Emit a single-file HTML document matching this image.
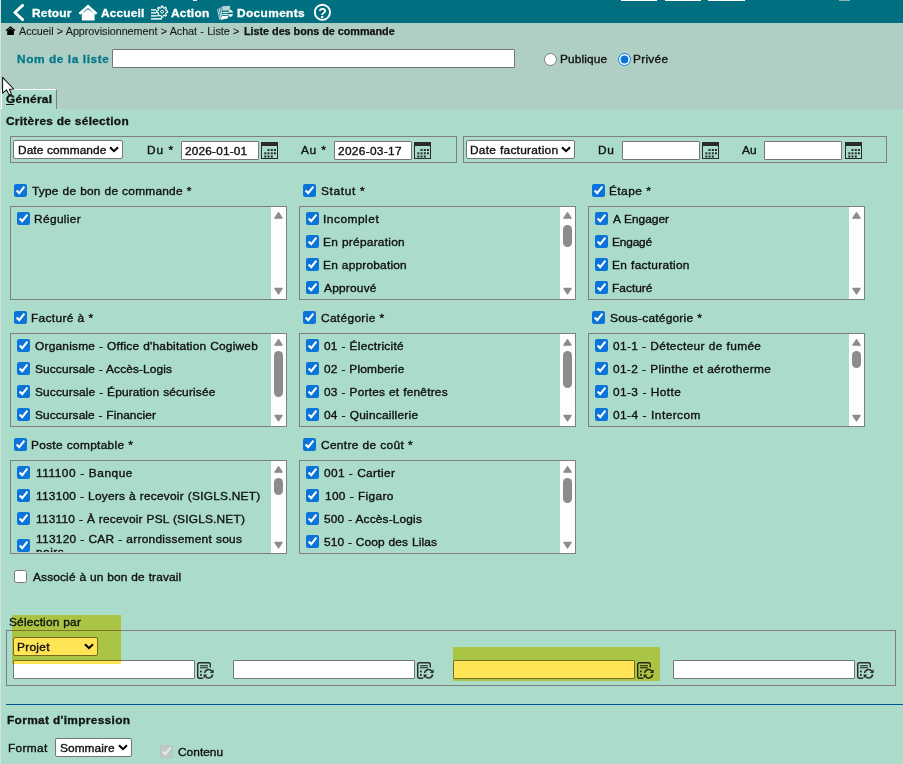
<!DOCTYPE html>
<html><head><meta charset="utf-8"><style>
html,body{margin:0;padding:0;width:903px;height:764px;overflow:hidden;font-family:"Liberation Sans",sans-serif;}
input{accent-color:#0a74d8}
</style></head><body>
<div style="position:absolute;left:0px;top:0px;width:903px;height:764px;background:#aadcc9"></div>
<div style="position:absolute;left:0px;top:0px;width:903px;height:23px;background:#006f7f"></div>
<div style="position:absolute;left:0px;top:23px;width:903px;height:86px;background:#afcfc4"></div>
<div style="position:absolute;left:0px;top:0px;width:1px;height:764px;background:#d5e2dd"></div>
<div style="position:absolute;left:621px;top:0px;width:36px;height:1px;background:#fff"></div>
<div style="position:absolute;left:665px;top:0px;width:36px;height:1px;background:#fff"></div>
<div style="position:absolute;left:708px;top:0px;width:37px;height:1px;background:#fff"></div>
<div style="position:absolute;left:839px;top:0px;width:11px;height:1px;background:#8fb3b9"></div>
<div style="position:absolute;left:193px;top:0px;width:4px;height:1px;background:#e8f4f4"></div>
<div style="position:absolute;left:1px;top:89px;width:56px;height:20px;background:#aadcc9;border-top:1px solid #fff;border-left:1px solid #fff;border-right:1px solid #808080;box-sizing:border-box"></div>
<div style="position:absolute;left:6px;top:104px;width:8px;height:1px;background:#111"></div>
<svg style="position:absolute;left:0;top:0" width="340" height="23" viewBox="0 0 340 23">
<polyline points="22.6,5.4 14.9,12.5 22.6,19.6" fill="none" stroke="#fff" stroke-width="2.9" stroke-linecap="round" stroke-linejoin="round"/>
<path d="M79.4,13.9 L88,6.3 L96.6,13.9" fill="none" stroke="#fff" stroke-width="2.6" stroke-linejoin="miter"/>
<path d="M81.8,20.5 L81.8,13.6 L88,9.2 L94.6,13.6 L94.6,20.5 Z" fill="#fff"/>
<g fill="#fff"><rect x="151" y="9.2" width="5" height="1.4"/><rect x="151" y="12.2" width="5" height="1.4"/><rect x="151" y="15.2" width="6" height="1.4"/><rect x="151" y="18.2" width="11" height="1.4"/></g>
<g transform="translate(162.1,11.7)"><path d="M-0.92,-3.99 L-0.78,-5.55 L0.78,-5.55 L0.92,-3.99 L2.17,-3.48 L3.37,-4.47 L4.47,-3.37 L3.48,-2.17 L3.99,-0.92 L5.55,-0.78 L5.55,0.78 L3.99,0.92 L3.48,2.17 L4.47,3.37 L3.37,4.47 L2.17,3.48 L0.92,3.99 L0.78,5.55 L-0.78,5.55 L-0.92,3.99 L-2.17,3.48 L-3.37,4.47 L-4.47,3.37 L-3.48,2.17 L-3.99,0.92 L-5.55,0.78 L-5.55,-0.78 L-3.99,-0.92 L-3.48,-2.17 L-4.47,-3.37 L-3.37,-4.47 L-2.17,-3.48 Z" fill="none" stroke="#fff" stroke-width="1.1" stroke-linejoin="round"/><circle cx="0" cy="0" r="1.4" fill="none" stroke="#fff" stroke-width="1"/></g>
<g>
<path d="M217.6,9.2 L219.8,19.6 M219.2,8.2 L221.2,19.6 M220.8,7.2 L222.4,19.4" fill="none" stroke="#e6f2f2" stroke-width="0.9"/>
<path d="M222,6.2 L230.2,5.8 L229.8,10.6 L222.4,10.8 Z" fill="#b8d2d5"/>
<rect x="222.6" y="11.9" width="5.2" height="1.1" fill="#f2f8f8"/>
<rect x="222.6" y="13.9" width="5.2" height="1.1" fill="#f2f8f8"/>
<path d="M222.4,16 L228.6,15.8 L227.6,18.4 L220.4,19.8 Z" fill="#fff"/>
<path d="M227.6,12.6 L230.6,9.6 L233.6,12.6 Z" fill="#fff"/>
<path d="M227.6,14.2 L230.6,17.2 L233.6,14.2 Z" fill="#fff"/>
</g>
<circle cx="322.4" cy="12.3" r="7.6" fill="none" stroke="#fff" stroke-width="1.9"/>
<text x="322.6" y="17.8" text-anchor="middle" font-family="Liberation Sans" font-weight="bold" font-size="14" fill="#fff">?</text>
</svg>
<svg style="position:absolute;left:5px;top:26px" width="12" height="10" viewBox="0 0 12 10">
<path d="M1,4.6 L5.5,1 L10,4.6" fill="none" stroke="#000" stroke-width="1.3"/>
<path d="M2.2,9 L2.2,4.6 L5.5,2.3 L8.9,4.6 L8.9,9 Z" fill="#000"/>
</svg>
<div style="position:absolute;left:112px;top:49px;width:403px;height:19px;background:#fff;border:1px solid #767676;border-radius:1px;box-sizing:border-box"></div>
<input type="radio" style="position:absolute;left:544px;top:53px;margin:0">
<input type="radio" checked style="position:absolute;left:618px;top:53px;margin:0">
<svg style="position:absolute;left:0px;top:74px" width="18" height="24" viewBox="0 0 18 24">
<path d="M2.6,3.4 L2.6,19.2 L6.5,15.9 L9.2,21 L11.4,20.2 L9.4,15.2 L13.6,15 Z" fill="#fff" stroke="#111" stroke-width="1.05" stroke-linejoin="round"/>
</svg>
<div style="position:absolute;left:10px;top:136px;width:447px;height:27px;border:1px solid #7f7f7f;box-sizing:border-box"></div>
<div style="position:absolute;left:463px;top:136px;width:424px;height:27px;border:1px solid #7f7f7f;box-sizing:border-box"></div>
<div style="position:absolute;left:13px;top:140px;width:110px;height:19px;background:#fff;border:1px solid #767676;border-radius:2px;box-sizing:border-box"></div>
<svg style="position:absolute;left:109px;top:146px" width="10" height="7" viewBox="0 0 10 7"><polyline points="1,1.2 5,5.2 9,1.2" fill="none" stroke="#000" stroke-width="2"/></svg>
<div style="position:absolute;left:181px;top:141px;width:78px;height:19px;background:#fff;border:1px solid #767676;border-radius:1px;box-sizing:border-box"></div>
<svg style="position:absolute;left:261px;top:142px" width="17" height="17" viewBox="0 0 17 17">
<rect x="0.5" y="0.5" width="16" height="16" fill="none" stroke="#2b2b2b" stroke-width="1"/>
<rect x="0" y="0" width="17" height="4" fill="#2b2b2b"/>
<g fill="#2b2b2b"><rect x="6.5" y="7" width="2" height="2"/><rect x="9.8" y="7" width="2" height="2"/><rect x="12.9" y="7" width="2" height="2"/>
<rect x="3.3" y="10.3" width="2" height="2"/><rect x="6.5" y="10.3" width="2" height="2"/><rect x="9.8" y="10.3" width="2" height="2"/><rect x="12.9" y="10.3" width="2" height="2"/>
<rect x="3.3" y="13.5" width="2" height="2"/><rect x="6.5" y="13.5" width="2" height="2"/><rect x="9.8" y="13.5" width="2" height="2"/></g>
</svg>
<div style="position:absolute;left:334px;top:141px;width:78px;height:19px;background:#fff;border:1px solid #767676;border-radius:1px;box-sizing:border-box"></div>
<svg style="position:absolute;left:414px;top:142px" width="17" height="17" viewBox="0 0 17 17">
<rect x="0.5" y="0.5" width="16" height="16" fill="none" stroke="#2b2b2b" stroke-width="1"/>
<rect x="0" y="0" width="17" height="4" fill="#2b2b2b"/>
<g fill="#2b2b2b"><rect x="6.5" y="7" width="2" height="2"/><rect x="9.8" y="7" width="2" height="2"/><rect x="12.9" y="7" width="2" height="2"/>
<rect x="3.3" y="10.3" width="2" height="2"/><rect x="6.5" y="10.3" width="2" height="2"/><rect x="9.8" y="10.3" width="2" height="2"/><rect x="12.9" y="10.3" width="2" height="2"/>
<rect x="3.3" y="13.5" width="2" height="2"/><rect x="6.5" y="13.5" width="2" height="2"/><rect x="9.8" y="13.5" width="2" height="2"/></g>
</svg>
<div style="position:absolute;left:466px;top:140px;width:109px;height:19px;background:#fff;border:1px solid #767676;border-radius:2px;box-sizing:border-box"></div>
<svg style="position:absolute;left:561px;top:146px" width="10" height="7" viewBox="0 0 10 7"><polyline points="1,1.2 5,5.2 9,1.2" fill="none" stroke="#000" stroke-width="2"/></svg>
<div style="position:absolute;left:622px;top:141px;width:78px;height:19px;background:#fff;border:1px solid #767676;border-radius:1px;box-sizing:border-box"></div>
<svg style="position:absolute;left:702px;top:142px" width="17" height="17" viewBox="0 0 17 17">
<rect x="0.5" y="0.5" width="16" height="16" fill="none" stroke="#2b2b2b" stroke-width="1"/>
<rect x="0" y="0" width="17" height="4" fill="#2b2b2b"/>
<g fill="#2b2b2b"><rect x="6.5" y="7" width="2" height="2"/><rect x="9.8" y="7" width="2" height="2"/><rect x="12.9" y="7" width="2" height="2"/>
<rect x="3.3" y="10.3" width="2" height="2"/><rect x="6.5" y="10.3" width="2" height="2"/><rect x="9.8" y="10.3" width="2" height="2"/><rect x="12.9" y="10.3" width="2" height="2"/>
<rect x="3.3" y="13.5" width="2" height="2"/><rect x="6.5" y="13.5" width="2" height="2"/><rect x="9.8" y="13.5" width="2" height="2"/></g>
</svg>
<div style="position:absolute;left:764px;top:141px;width:78px;height:19px;background:#fff;border:1px solid #767676;border-radius:1px;box-sizing:border-box"></div>
<svg style="position:absolute;left:845px;top:142px" width="17" height="17" viewBox="0 0 17 17">
<rect x="0.5" y="0.5" width="16" height="16" fill="none" stroke="#2b2b2b" stroke-width="1"/>
<rect x="0" y="0" width="17" height="4" fill="#2b2b2b"/>
<g fill="#2b2b2b"><rect x="6.5" y="7" width="2" height="2"/><rect x="9.8" y="7" width="2" height="2"/><rect x="12.9" y="7" width="2" height="2"/>
<rect x="3.3" y="10.3" width="2" height="2"/><rect x="6.5" y="10.3" width="2" height="2"/><rect x="9.8" y="10.3" width="2" height="2"/><rect x="12.9" y="10.3" width="2" height="2"/>
<rect x="3.3" y="13.5" width="2" height="2"/><rect x="6.5" y="13.5" width="2" height="2"/><rect x="9.8" y="13.5" width="2" height="2"/></g>
</svg>
<input type="checkbox" checked style="position:absolute;left:14px;top:184px;margin:0">
<div style="position:absolute;left:10px;top:206px;width:277px;height:94px;border:1px solid #7f7f7f;box-sizing:border-box;overflow:hidden"></div>
<div style="position:absolute;left:271px;top:207px;width:15px;height:92px;background:#fdfdfd"></div>
<svg style="position:absolute;left:271px;top:207px" width="15" height="91" viewBox="0 0 15 91"><path d="M3.9,11.2 L7.5,5.7 L11.1,11.2 Z" fill="#8c8c8c" stroke="#8c8c8c" stroke-width="1.3" stroke-linejoin="round"/><path d="M3.9,81.4 L7.5,86.9 L11.1,81.4 Z" fill="#8c8c8c" stroke="#8c8c8c" stroke-width="1.3" stroke-linejoin="round"/></svg>
<input type="checkbox" checked style="position:absolute;left:17px;top:212px;margin:0">
<input type="checkbox" checked style="position:absolute;left:303px;top:184px;margin:0">
<div style="position:absolute;left:299px;top:206px;width:277px;height:94px;border:1px solid #7f7f7f;box-sizing:border-box;overflow:hidden"></div>
<div style="position:absolute;left:560px;top:207px;width:15px;height:92px;background:#fdfdfd"></div>
<svg style="position:absolute;left:560px;top:207px" width="15" height="91" viewBox="0 0 15 91"><path d="M3.9,11.2 L7.5,5.7 L11.1,11.2 Z" fill="#8c8c8c" stroke="#8c8c8c" stroke-width="1.3" stroke-linejoin="round"/><path d="M3.9,81.4 L7.5,86.9 L11.1,81.4 Z" fill="#8c8c8c" stroke="#8c8c8c" stroke-width="1.3" stroke-linejoin="round"/></svg>
<div style="position:absolute;left:563px;top:224.7px;width:9px;height:21.9px;background:#8c8c8c;border-radius:4.5px"></div>
<input type="checkbox" checked style="position:absolute;left:306px;top:212px;margin:0">
<input type="checkbox" checked style="position:absolute;left:306px;top:235px;margin:0">
<input type="checkbox" checked style="position:absolute;left:306px;top:258px;margin:0">
<input type="checkbox" checked style="position:absolute;left:306px;top:281px;margin:0">
<input type="checkbox" checked style="position:absolute;left:592px;top:184px;margin:0">
<div style="position:absolute;left:588px;top:206px;width:277px;height:94px;border:1px solid #7f7f7f;box-sizing:border-box;overflow:hidden"></div>
<div style="position:absolute;left:849px;top:207px;width:15px;height:92px;background:#fdfdfd"></div>
<svg style="position:absolute;left:849px;top:207px" width="15" height="91" viewBox="0 0 15 91"><path d="M3.9,11.2 L7.5,5.7 L11.1,11.2 Z" fill="#8c8c8c" stroke="#8c8c8c" stroke-width="1.3" stroke-linejoin="round"/><path d="M3.9,81.4 L7.5,86.9 L11.1,81.4 Z" fill="#8c8c8c" stroke="#8c8c8c" stroke-width="1.3" stroke-linejoin="round"/></svg>
<input type="checkbox" checked style="position:absolute;left:595px;top:212px;margin:0">
<input type="checkbox" checked style="position:absolute;left:595px;top:235px;margin:0">
<input type="checkbox" checked style="position:absolute;left:595px;top:258px;margin:0">
<input type="checkbox" checked style="position:absolute;left:595px;top:281px;margin:0">
<input type="checkbox" checked style="position:absolute;left:14px;top:311px;margin:0">
<div style="position:absolute;left:10px;top:333px;width:277px;height:94px;border:1px solid #7f7f7f;box-sizing:border-box;overflow:hidden"></div>
<div style="position:absolute;left:271px;top:334px;width:15px;height:92px;background:#fdfdfd"></div>
<svg style="position:absolute;left:271px;top:334px" width="15" height="91" viewBox="0 0 15 91"><path d="M3.9,11.2 L7.5,5.7 L11.1,11.2 Z" fill="#8c8c8c" stroke="#8c8c8c" stroke-width="1.3" stroke-linejoin="round"/><path d="M3.9,81.4 L7.5,86.9 L11.1,81.4 Z" fill="#8c8c8c" stroke="#8c8c8c" stroke-width="1.3" stroke-linejoin="round"/></svg>
<div style="position:absolute;left:274px;top:351.3px;width:9px;height:45.3px;background:#8c8c8c;border-radius:4.5px"></div>
<input type="checkbox" checked style="position:absolute;left:17px;top:339px;margin:0">
<input type="checkbox" checked style="position:absolute;left:17px;top:362px;margin:0">
<input type="checkbox" checked style="position:absolute;left:17px;top:385px;margin:0">
<input type="checkbox" checked style="position:absolute;left:17px;top:408px;margin:0">
<input type="checkbox" checked style="position:absolute;left:303px;top:311px;margin:0">
<div style="position:absolute;left:299px;top:333px;width:277px;height:94px;border:1px solid #7f7f7f;box-sizing:border-box;overflow:hidden"></div>
<div style="position:absolute;left:560px;top:334px;width:15px;height:92px;background:#fdfdfd"></div>
<svg style="position:absolute;left:560px;top:334px" width="15" height="91" viewBox="0 0 15 91"><path d="M3.9,11.2 L7.5,5.7 L11.1,11.2 Z" fill="#8c8c8c" stroke="#8c8c8c" stroke-width="1.3" stroke-linejoin="round"/><path d="M3.9,81.4 L7.5,86.9 L11.1,81.4 Z" fill="#8c8c8c" stroke="#8c8c8c" stroke-width="1.3" stroke-linejoin="round"/></svg>
<div style="position:absolute;left:563px;top:351.3px;width:9px;height:37.0px;background:#8c8c8c;border-radius:4.5px"></div>
<input type="checkbox" checked style="position:absolute;left:306px;top:339px;margin:0">
<input type="checkbox" checked style="position:absolute;left:306px;top:362px;margin:0">
<input type="checkbox" checked style="position:absolute;left:306px;top:385px;margin:0">
<input type="checkbox" checked style="position:absolute;left:306px;top:408px;margin:0">
<input type="checkbox" checked style="position:absolute;left:592px;top:311px;margin:0">
<div style="position:absolute;left:588px;top:333px;width:277px;height:94px;border:1px solid #7f7f7f;box-sizing:border-box;overflow:hidden"></div>
<div style="position:absolute;left:849px;top:334px;width:15px;height:92px;background:#fdfdfd"></div>
<svg style="position:absolute;left:849px;top:334px" width="15" height="91" viewBox="0 0 15 91"><path d="M3.9,11.2 L7.5,5.7 L11.1,11.2 Z" fill="#8c8c8c" stroke="#8c8c8c" stroke-width="1.3" stroke-linejoin="round"/><path d="M3.9,81.4 L7.5,86.9 L11.1,81.4 Z" fill="#8c8c8c" stroke="#8c8c8c" stroke-width="1.3" stroke-linejoin="round"/></svg>
<div style="position:absolute;left:852px;top:351.3px;width:9px;height:17.2px;background:#8c8c8c;border-radius:4.5px"></div>
<input type="checkbox" checked style="position:absolute;left:595px;top:339px;margin:0">
<input type="checkbox" checked style="position:absolute;left:595px;top:362px;margin:0">
<input type="checkbox" checked style="position:absolute;left:595px;top:385px;margin:0">
<input type="checkbox" checked style="position:absolute;left:595px;top:408px;margin:0">
<input type="checkbox" checked style="position:absolute;left:14px;top:438px;margin:0">
<div style="position:absolute;left:10px;top:460px;width:277px;height:94px;border:1px solid #7f7f7f;box-sizing:border-box;overflow:hidden"></div>
<div style="position:absolute;left:271px;top:461px;width:15px;height:92px;background:#fdfdfd"></div>
<svg style="position:absolute;left:271px;top:461px" width="15" height="91" viewBox="0 0 15 91"><path d="M3.9,11.2 L7.5,5.7 L11.1,11.2 Z" fill="#8c8c8c" stroke="#8c8c8c" stroke-width="1.3" stroke-linejoin="round"/><path d="M3.9,81.4 L7.5,86.9 L11.1,81.4 Z" fill="#8c8c8c" stroke="#8c8c8c" stroke-width="1.3" stroke-linejoin="round"/></svg>
<div style="position:absolute;left:274px;top:478.3px;width:9px;height:17.2px;background:#8c8c8c;border-radius:4.5px"></div>
<input type="checkbox" checked style="position:absolute;left:17px;top:466px;margin:0">
<input type="checkbox" checked style="position:absolute;left:17px;top:489px;margin:0">
<input type="checkbox" checked style="position:absolute;left:17px;top:512px;margin:0">
<input type="checkbox" checked style="position:absolute;left:17px;top:539px;margin:0">
<input type="checkbox" checked style="position:absolute;left:303px;top:438px;margin:0">
<div style="position:absolute;left:299px;top:460px;width:277px;height:94px;border:1px solid #7f7f7f;box-sizing:border-box;overflow:hidden"></div>
<div style="position:absolute;left:560px;top:461px;width:15px;height:92px;background:#fdfdfd"></div>
<svg style="position:absolute;left:560px;top:461px" width="15" height="91" viewBox="0 0 15 91"><path d="M3.9,11.2 L7.5,5.7 L11.1,11.2 Z" fill="#8c8c8c" stroke="#8c8c8c" stroke-width="1.3" stroke-linejoin="round"/><path d="M3.9,81.4 L7.5,86.9 L11.1,81.4 Z" fill="#8c8c8c" stroke="#8c8c8c" stroke-width="1.3" stroke-linejoin="round"/></svg>
<div style="position:absolute;left:563px;top:478.3px;width:9px;height:25.2px;background:#8c8c8c;border-radius:4.5px"></div>
<input type="checkbox" checked style="position:absolute;left:306px;top:466px;margin:0">
<input type="checkbox" checked style="position:absolute;left:306px;top:489px;margin:0">
<input type="checkbox" checked style="position:absolute;left:306px;top:512px;margin:0">
<input type="checkbox" checked style="position:absolute;left:306px;top:535px;margin:0">
<input type="checkbox" style="position:absolute;left:14px;top:570px;margin:0">
<div style="position:absolute;left:6px;top:630px;width:890px;height:56px;border:1px solid #7f7f7f;box-sizing:border-box"></div>
<div style="position:absolute;left:13px;top:637px;width:85px;height:19px;background:#fff;border:1px solid #767676;border-radius:2px;box-sizing:border-box"></div>
<svg style="position:absolute;left:84px;top:643px" width="10" height="7" viewBox="0 0 10 7"><polyline points="1,1.2 5,5.2 9,1.2" fill="none" stroke="#000" stroke-width="2"/></svg>
<div style="position:absolute;left:13px;top:660px;width:182px;height:19px;background:#fff;border:1px solid #767676;border-radius:1px;box-sizing:border-box"></div>
<svg style="position:absolute;left:197px;top:662px" width="18" height="17" viewBox="0 0 18 17">
<path d="M6,16.3 L2.5,16.3 Q0.7,16.3 0.7,14.5 L0.7,2.5 Q0.7,0.7 2.5,0.7 L11.5,0.7 Q13.3,0.7 13.3,2.5 L13.3,5.5" fill="none" stroke="#2b2b2b" stroke-width="1.4"/>
<rect x="3" y="3.2" width="8" height="1.1" fill="#2b2b2b"/><rect x="3" y="5.2" width="8" height="1.1" fill="#2b2b2b"/>
<rect x="3" y="8.6" width="1.8" height="1.8" fill="#2b2b2b"/><rect x="3" y="12" width="1.8" height="1.8" fill="#2b2b2b"/>
<path d="M7.6,11 A4,4 0 0 1 14.8,9.2" fill="none" stroke="#2b2b2b" stroke-width="1.5"/><path d="M16.6,7.2 L16.6,11 L12.8,11 Z" fill="#2b2b2b"/>
<path d="M15.6,12.4 A4,4 0 0 1 8.4,14.4" fill="none" stroke="#2b2b2b" stroke-width="1.5"/><path d="M6.6,16.4 L6.6,12.6 L10.4,12.6 Z" fill="#2b2b2b"/>
</svg>
<div style="position:absolute;left:233px;top:660px;width:182px;height:19px;background:#fff;border:1px solid #767676;border-radius:1px;box-sizing:border-box"></div>
<svg style="position:absolute;left:417px;top:662px" width="18" height="17" viewBox="0 0 18 17">
<path d="M6,16.3 L2.5,16.3 Q0.7,16.3 0.7,14.5 L0.7,2.5 Q0.7,0.7 2.5,0.7 L11.5,0.7 Q13.3,0.7 13.3,2.5 L13.3,5.5" fill="none" stroke="#2b2b2b" stroke-width="1.4"/>
<rect x="3" y="3.2" width="8" height="1.1" fill="#2b2b2b"/><rect x="3" y="5.2" width="8" height="1.1" fill="#2b2b2b"/>
<rect x="3" y="8.6" width="1.8" height="1.8" fill="#2b2b2b"/><rect x="3" y="12" width="1.8" height="1.8" fill="#2b2b2b"/>
<path d="M7.6,11 A4,4 0 0 1 14.8,9.2" fill="none" stroke="#2b2b2b" stroke-width="1.5"/><path d="M16.6,7.2 L16.6,11 L12.8,11 Z" fill="#2b2b2b"/>
<path d="M15.6,12.4 A4,4 0 0 1 8.4,14.4" fill="none" stroke="#2b2b2b" stroke-width="1.5"/><path d="M6.6,16.4 L6.6,12.6 L10.4,12.6 Z" fill="#2b2b2b"/>
</svg>
<div style="position:absolute;left:453px;top:660px;width:182px;height:19px;background:#fff;border:1px solid #767676;border-radius:1px;box-sizing:border-box"></div>
<svg style="position:absolute;left:637px;top:662px" width="18" height="17" viewBox="0 0 18 17">
<path d="M6,16.3 L2.5,16.3 Q0.7,16.3 0.7,14.5 L0.7,2.5 Q0.7,0.7 2.5,0.7 L11.5,0.7 Q13.3,0.7 13.3,2.5 L13.3,5.5" fill="none" stroke="#2b2b2b" stroke-width="1.4"/>
<rect x="3" y="3.2" width="8" height="1.1" fill="#2b2b2b"/><rect x="3" y="5.2" width="8" height="1.1" fill="#2b2b2b"/>
<rect x="3" y="8.6" width="1.8" height="1.8" fill="#2b2b2b"/><rect x="3" y="12" width="1.8" height="1.8" fill="#2b2b2b"/>
<path d="M7.6,11 A4,4 0 0 1 14.8,9.2" fill="none" stroke="#2b2b2b" stroke-width="1.5"/><path d="M16.6,7.2 L16.6,11 L12.8,11 Z" fill="#2b2b2b"/>
<path d="M15.6,12.4 A4,4 0 0 1 8.4,14.4" fill="none" stroke="#2b2b2b" stroke-width="1.5"/><path d="M6.6,16.4 L6.6,12.6 L10.4,12.6 Z" fill="#2b2b2b"/>
</svg>
<div style="position:absolute;left:673px;top:660px;width:182px;height:19px;background:#fff;border:1px solid #767676;border-radius:1px;box-sizing:border-box"></div>
<svg style="position:absolute;left:857px;top:662px" width="18" height="17" viewBox="0 0 18 17">
<path d="M6,16.3 L2.5,16.3 Q0.7,16.3 0.7,14.5 L0.7,2.5 Q0.7,0.7 2.5,0.7 L11.5,0.7 Q13.3,0.7 13.3,2.5 L13.3,5.5" fill="none" stroke="#2b2b2b" stroke-width="1.4"/>
<rect x="3" y="3.2" width="8" height="1.1" fill="#2b2b2b"/><rect x="3" y="5.2" width="8" height="1.1" fill="#2b2b2b"/>
<rect x="3" y="8.6" width="1.8" height="1.8" fill="#2b2b2b"/><rect x="3" y="12" width="1.8" height="1.8" fill="#2b2b2b"/>
<path d="M7.6,11 A4,4 0 0 1 14.8,9.2" fill="none" stroke="#2b2b2b" stroke-width="1.5"/><path d="M16.6,7.2 L16.6,11 L12.8,11 Z" fill="#2b2b2b"/>
<path d="M15.6,12.4 A4,4 0 0 1 8.4,14.4" fill="none" stroke="#2b2b2b" stroke-width="1.5"/><path d="M6.6,16.4 L6.6,12.6 L10.4,12.6 Z" fill="#2b2b2b"/>
</svg>
<div style="position:absolute;left:12px;top:615px;width:109px;height:49px;background:#ffe455;mix-blend-mode:multiply"></div>
<div style="position:absolute;left:453px;top:647px;width:207px;height:34px;background:#ffe455;mix-blend-mode:multiply"></div>
<div style="position:absolute;left:6px;top:704px;width:897px;height:1px;background:#03539b"></div>
<div style="position:absolute;left:55px;top:738px;width:77px;height:19px;background:#fff;border:1px solid #767676;border-radius:2px;box-sizing:border-box"></div>
<svg style="position:absolute;left:118px;top:744px" width="10" height="7" viewBox="0 0 10 7"><polyline points="1,1.2 5,5.2 9,1.2" fill="none" stroke="#000" stroke-width="2"/></svg>
<input type="checkbox" checked disabled style="position:absolute;left:160px;top:745px;margin:0">
<span style="position:absolute;left:31.6px;top:7px;font:bold 11px/13px 'Liberation Sans';white-space:pre;transform:scaleX(1.08);transform-origin:0 0;letter-spacing:0.223px;word-spacing:0.0px;-webkit-text-stroke:0.3px currentColor;color:#fff">Retour</span>
<span style="position:absolute;left:101px;top:7px;font:bold 11px/13px 'Liberation Sans';white-space:pre;transform:scaleX(1.08);transform-origin:0 0;letter-spacing:0.154px;word-spacing:0.0px;-webkit-text-stroke:0.3px currentColor;color:#fff">Accueil</span>
<span style="position:absolute;left:171.4px;top:7px;font:bold 11px/13px 'Liberation Sans';white-space:pre;transform:scaleX(1.08);transform-origin:0 0;letter-spacing:0.222px;word-spacing:0.0px;-webkit-text-stroke:0.3px currentColor;color:#fff">Action</span>
<span style="position:absolute;left:237px;top:7px;font:bold 11px/13px 'Liberation Sans';white-space:pre;transform:scaleX(1.08);transform-origin:0 0;letter-spacing:0.347px;word-spacing:0.0px;-webkit-text-stroke:0.3px currentColor;color:#fff">Documents</span>
<span style="position:absolute;left:19px;top:25px;font:normal 10px/13px 'Liberation Sans';white-space:pre;transform:scaleX(1.08);transform-origin:0 0;letter-spacing:-0.042px;word-spacing:0.3px;-webkit-text-stroke:0.12px currentColor;color:#1b1b1b">Accueil &gt; Approvisionnement &gt; Achat - Liste &gt;</span>
<span style="position:absolute;left:243.6px;top:25px;font:bold 10px/13px 'Liberation Sans';white-space:pre;transform:scaleX(1.08);transform-origin:0 0;letter-spacing:-0.022px;word-spacing:0.0px;-webkit-text-stroke:0.25px currentColor;color:#111">Liste des bons de commande</span>
<span style="position:absolute;left:16.5px;top:53px;font:bold 11px/13px 'Liberation Sans';white-space:pre;transform:scaleX(1.08);transform-origin:0 0;letter-spacing:0.529px;word-spacing:0.0px;-webkit-text-stroke:0.3px currentColor;color:#05788a">Nom de la liste</span>
<span style="position:absolute;left:559.9px;top:53px;font:normal 11px/13px 'Liberation Sans';white-space:pre;transform:scaleX(1.08);transform-origin:0 0;letter-spacing:0.106px;word-spacing:0.3px;-webkit-text-stroke:0.35px currentColor;color:#111">Publique</span>
<span style="position:absolute;left:633.1px;top:53px;font:normal 11px/13px 'Liberation Sans';white-space:pre;transform:scaleX(1.08);transform-origin:0 0;letter-spacing:0.26px;word-spacing:0.3px;-webkit-text-stroke:0.35px currentColor;color:#111">Privée</span>
<span style="position:absolute;left:6.3px;top:93px;font:bold 11px/13px 'Liberation Sans';white-space:pre;transform:scaleX(1.08);transform-origin:0 0;letter-spacing:0.278px;word-spacing:0.0px;-webkit-text-stroke:0.3px currentColor;color:#111">Général</span>
<span style="position:absolute;left:6.3px;top:115px;font:bold 11px/13px 'Liberation Sans';white-space:pre;transform:scaleX(1.08);transform-origin:0 0;letter-spacing:0.268px;word-spacing:0.0px;-webkit-text-stroke:0.3px currentColor;color:#111">Critères de sélection</span>
<span style="position:absolute;left:17.6px;top:144px;font:normal 11px/13px 'Liberation Sans';white-space:pre;transform:scaleX(1.08);transform-origin:0 0;letter-spacing:0.061px;word-spacing:0.3px;-webkit-text-stroke:0.35px currentColor;color:#111">Date commande</span>
<span style="position:absolute;left:146.5px;top:144px;font:normal 11px/13px 'Liberation Sans';white-space:pre;transform:scaleX(1.08);transform-origin:0 0;letter-spacing:0.864px;word-spacing:0.3px;-webkit-text-stroke:0.35px currentColor;color:#111">Du *</span>
<span style="position:absolute;left:185.4px;top:145px;font:normal 11px/13px 'Liberation Sans';white-space:pre;transform:scaleX(1.08);transform-origin:0 0;letter-spacing:0.144px;word-spacing:0.3px;-webkit-text-stroke:0.35px currentColor;color:#111">2026-01-01</span>
<span style="position:absolute;left:301px;top:144px;font:normal 11px/13px 'Liberation Sans';white-space:pre;transform:scaleX(1.08);transform-origin:0 0;letter-spacing:0.617px;word-spacing:0.3px;-webkit-text-stroke:0.35px currentColor;color:#111">Au *</span>
<span style="position:absolute;left:338px;top:145px;font:normal 11px/13px 'Liberation Sans';white-space:pre;transform:scaleX(1.08);transform-origin:0 0;letter-spacing:0.288px;word-spacing:0.3px;-webkit-text-stroke:0.35px currentColor;color:#111">2026-03-17</span>
<span style="position:absolute;left:470.1px;top:144px;font:normal 11px/13px 'Liberation Sans';white-space:pre;transform:scaleX(1.08);transform-origin:0 0;letter-spacing:0.235px;word-spacing:0.3px;-webkit-text-stroke:0.35px currentColor;color:#111">Date facturation</span>
<span style="position:absolute;left:598.4px;top:144px;font:normal 11px/13px 'Liberation Sans';white-space:pre;transform:scaleX(1.08);transform-origin:0 0;letter-spacing:0.556px;word-spacing:0.3px;-webkit-text-stroke:0.35px currentColor;color:#111">Du</span>
<span style="position:absolute;left:741.8px;top:144px;font:normal 11px/13px 'Liberation Sans';white-space:pre;transform:scaleX(1.08);transform-origin:0 0;letter-spacing:0.0px;word-spacing:0.3px;-webkit-text-stroke:0.35px currentColor;color:#111">Au</span>
<span style="position:absolute;left:32.3px;top:185px;font:normal 11px/13px 'Liberation Sans';white-space:pre;transform:scaleX(1.08);transform-origin:0 0;letter-spacing:0.223px;word-spacing:0.3px;-webkit-text-stroke:0.35px currentColor;color:#111">Type de bon de commande *</span>
<span style="position:absolute;left:34.3px;top:213px;font:normal 11px/13px 'Liberation Sans';white-space:pre;transform:scaleX(1.08);transform-origin:0 0;letter-spacing:0.337px;word-spacing:0.3px;-webkit-text-stroke:0.35px currentColor;color:#111">Régulier</span>
<span style="position:absolute;left:321.3px;top:185px;font:normal 11px/13px 'Liberation Sans';white-space:pre;transform:scaleX(1.08);transform-origin:0 0;letter-spacing:0.582px;word-spacing:0.3px;-webkit-text-stroke:0.35px currentColor;color:#111">Statut *</span>
<span style="position:absolute;left:323.3px;top:213px;font:normal 11px/13px 'Liberation Sans';white-space:pre;transform:scaleX(1.08);transform-origin:0 0;letter-spacing:0.486px;word-spacing:0.3px;-webkit-text-stroke:0.35px currentColor;color:#111">Incomplet</span>
<span style="position:absolute;left:323.3px;top:236px;font:normal 11px/13px 'Liberation Sans';white-space:pre;transform:scaleX(1.08);transform-origin:0 0;letter-spacing:0.243px;word-spacing:0.3px;-webkit-text-stroke:0.35px currentColor;color:#111">En préparation</span>
<span style="position:absolute;left:323.3px;top:259px;font:normal 11px/13px 'Liberation Sans';white-space:pre;transform:scaleX(1.08);transform-origin:0 0;letter-spacing:0.2px;word-spacing:0.3px;-webkit-text-stroke:0.35px currentColor;color:#111">En approbation</span>
<span style="position:absolute;left:324.3px;top:282px;font:normal 11px/13px 'Liberation Sans';white-space:pre;transform:scaleX(1.08);transform-origin:0 0;letter-spacing:0.212px;word-spacing:0.3px;-webkit-text-stroke:0.35px currentColor;color:#111">Approuvé</span>
<span style="position:absolute;left:609.3px;top:185px;font:normal 11px/13px 'Liberation Sans';white-space:pre;transform:scaleX(1.08);transform-origin:0 0;letter-spacing:0.401px;word-spacing:0.3px;-webkit-text-stroke:0.35px currentColor;color:#111">Étape *</span>
<span style="position:absolute;left:613.3px;top:213px;font:normal 11px/13px 'Liberation Sans';white-space:pre;transform:scaleX(1.08);transform-origin:0 0;letter-spacing:0.024px;word-spacing:0.3px;-webkit-text-stroke:0.35px currentColor;color:#111">A Engager</span>
<span style="position:absolute;left:612.3px;top:236px;font:normal 11px/13px 'Liberation Sans';white-space:pre;transform:scaleX(1.08);transform-origin:0 0;letter-spacing:-0.148px;word-spacing:0.3px;-webkit-text-stroke:0.35px currentColor;color:#111">Engagé</span>
<span style="position:absolute;left:612.3px;top:259px;font:normal 11px/13px 'Liberation Sans';white-space:pre;transform:scaleX(1.08);transform-origin:0 0;letter-spacing:0.271px;word-spacing:0.3px;-webkit-text-stroke:0.35px currentColor;color:#111">En facturation</span>
<span style="position:absolute;left:612.3px;top:282px;font:normal 11px/13px 'Liberation Sans';white-space:pre;transform:scaleX(1.08);transform-origin:0 0;letter-spacing:0.03px;word-spacing:0.3px;-webkit-text-stroke:0.35px currentColor;color:#111">Facturé</span>
<span style="position:absolute;left:31.3px;top:312px;font:normal 11px/13px 'Liberation Sans';white-space:pre;transform:scaleX(1.08);transform-origin:0 0;letter-spacing:0.315px;word-spacing:0.3px;-webkit-text-stroke:0.35px currentColor;color:#111">Facturé à *</span>
<span style="position:absolute;left:35.3px;top:340px;font:normal 11px/13px 'Liberation Sans';white-space:pre;transform:scaleX(1.08);transform-origin:0 0;letter-spacing:0.215px;word-spacing:0.3px;-webkit-text-stroke:0.35px currentColor;color:#111">Organisme - Office d'habitation Cogiweb</span>
<span style="position:absolute;left:35.3px;top:363px;font:normal 11px/13px 'Liberation Sans';white-space:pre;transform:scaleX(1.08);transform-origin:0 0;letter-spacing:0.121px;word-spacing:0.3px;-webkit-text-stroke:0.35px currentColor;color:#111">Succursale - Accès-Logis</span>
<span style="position:absolute;left:35.3px;top:386px;font:normal 11px/13px 'Liberation Sans';white-space:pre;transform:scaleX(1.08);transform-origin:0 0;letter-spacing:0.149px;word-spacing:0.3px;-webkit-text-stroke:0.35px currentColor;color:#111">Succursale - Épuration sécurisée</span>
<span style="position:absolute;left:35.3px;top:409px;font:normal 11px/13px 'Liberation Sans';white-space:pre;transform:scaleX(1.08);transform-origin:0 0;letter-spacing:0.097px;word-spacing:0.3px;-webkit-text-stroke:0.35px currentColor;color:#111">Succursale - Financier</span>
<span style="position:absolute;left:321.3px;top:312px;font:normal 11px/13px 'Liberation Sans';white-space:pre;transform:scaleX(1.08);transform-origin:0 0;letter-spacing:0.315px;word-spacing:0.3px;-webkit-text-stroke:0.35px currentColor;color:#111">Catégorie *</span>
<span style="position:absolute;left:324.3px;top:340px;font:normal 11px/13px 'Liberation Sans';white-space:pre;transform:scaleX(1.08);transform-origin:0 0;letter-spacing:0.223px;word-spacing:0.3px;-webkit-text-stroke:0.35px currentColor;color:#111">01 - Électricité</span>
<span style="position:absolute;left:324.3px;top:363px;font:normal 11px/13px 'Liberation Sans';white-space:pre;transform:scaleX(1.08);transform-origin:0 0;letter-spacing:0.171px;word-spacing:0.3px;-webkit-text-stroke:0.35px currentColor;color:#111">02 - Plomberie</span>
<span style="position:absolute;left:324.3px;top:386px;font:normal 11px/13px 'Liberation Sans';white-space:pre;transform:scaleX(1.08);transform-origin:0 0;letter-spacing:0.202px;word-spacing:0.3px;-webkit-text-stroke:0.35px currentColor;color:#111">03 - Portes et fenêtres</span>
<span style="position:absolute;left:324.3px;top:409px;font:normal 11px/13px 'Liberation Sans';white-space:pre;transform:scaleX(1.08);transform-origin:0 0;letter-spacing:0.229px;word-spacing:0.3px;-webkit-text-stroke:0.35px currentColor;color:#111">04 - Quincaillerie</span>
<span style="position:absolute;left:610.3px;top:312px;font:normal 11px/13px 'Liberation Sans';white-space:pre;transform:scaleX(1.08);transform-origin:0 0;letter-spacing:0.222px;word-spacing:0.3px;-webkit-text-stroke:0.35px currentColor;color:#111">Sous-catégorie *</span>
<span style="position:absolute;left:613.3px;top:340px;font:normal 11px/13px 'Liberation Sans';white-space:pre;transform:scaleX(1.08);transform-origin:0 0;letter-spacing:0.308px;word-spacing:0.3px;-webkit-text-stroke:0.35px currentColor;color:#111">01-1 - Détecteur de fumée</span>
<span style="position:absolute;left:613.3px;top:363px;font:normal 11px/13px 'Liberation Sans';white-space:pre;transform:scaleX(1.08);transform-origin:0 0;letter-spacing:0.295px;word-spacing:0.3px;-webkit-text-stroke:0.35px currentColor;color:#111">01-2 - Plinthe et aérotherme</span>
<span style="position:absolute;left:613.3px;top:386px;font:normal 11px/13px 'Liberation Sans';white-space:pre;transform:scaleX(1.08);transform-origin:0 0;letter-spacing:0.371px;word-spacing:0.3px;-webkit-text-stroke:0.35px currentColor;color:#111">01-3 - Hotte</span>
<span style="position:absolute;left:613.3px;top:409px;font:normal 11px/13px 'Liberation Sans';white-space:pre;transform:scaleX(1.08);transform-origin:0 0;letter-spacing:0.411px;word-spacing:0.3px;-webkit-text-stroke:0.35px currentColor;color:#111">01-4 - Intercom</span>
<span style="position:absolute;left:31.3px;top:439px;font:normal 11px/13px 'Liberation Sans';white-space:pre;transform:scaleX(1.08);transform-origin:0 0;letter-spacing:0.278px;word-spacing:0.3px;-webkit-text-stroke:0.35px currentColor;color:#111">Poste comptable *</span>
<span style="position:absolute;left:35.6px;top:467px;font:normal 11px/13px 'Liberation Sans';white-space:pre;transform:scaleX(1.08);transform-origin:0 0;letter-spacing:0.477px;word-spacing:0.3px;-webkit-text-stroke:0.35px currentColor;color:#111">111100 - Banque</span>
<span style="position:absolute;left:35.6px;top:490px;font:normal 11px/13px 'Liberation Sans';white-space:pre;transform:scaleX(1.08);transform-origin:0 0;letter-spacing:0.22px;word-spacing:0.3px;-webkit-text-stroke:0.35px currentColor;color:#111">113100 - Loyers à recevoir (SIGLS.NET)</span>
<span style="position:absolute;left:35.6px;top:513px;font:normal 11px/13px 'Liberation Sans';white-space:pre;transform:scaleX(1.08);transform-origin:0 0;letter-spacing:0.185px;word-spacing:0.3px;-webkit-text-stroke:0.35px currentColor;color:#111">113110 - À recevoir PSL (SIGLS.NET)</span>
<span style="position:absolute;left:35.6px;top:533px;font:normal 11px/13px 'Liberation Sans';white-space:pre;transform:scaleX(1.08);transform-origin:0 0;letter-spacing:0.253px;word-spacing:0.3px;-webkit-text-stroke:0.35px currentColor;color:#111">113120 - CAR - arrondissement sous</span>
<span style="position:absolute;left:321.3px;top:439px;font:normal 11px/13px 'Liberation Sans';white-space:pre;transform:scaleX(1.08);transform-origin:0 0;letter-spacing:0.297px;word-spacing:0.3px;-webkit-text-stroke:0.35px currentColor;color:#111">Centre de coût *</span>
<span style="position:absolute;left:324.3px;top:467px;font:normal 11px/13px 'Liberation Sans';white-space:pre;transform:scaleX(1.08);transform-origin:0 0;letter-spacing:0.324px;word-spacing:0.3px;-webkit-text-stroke:0.35px currentColor;color:#111">001 - Cartier</span>
<span style="position:absolute;left:324.6px;top:490px;font:normal 11px/13px 'Liberation Sans';white-space:pre;transform:scaleX(1.08);transform-origin:0 0;letter-spacing:0.303px;word-spacing:0.3px;-webkit-text-stroke:0.35px currentColor;color:#111">100 - Figaro</span>
<span style="position:absolute;left:324.3px;top:513px;font:normal 11px/13px 'Liberation Sans';white-space:pre;transform:scaleX(1.08);transform-origin:0 0;letter-spacing:0.162px;word-spacing:0.3px;-webkit-text-stroke:0.35px currentColor;color:#111">500 - Accès-Logis</span>
<span style="position:absolute;left:324.3px;top:536px;font:normal 11px/13px 'Liberation Sans';white-space:pre;transform:scaleX(1.08);transform-origin:0 0;letter-spacing:0.127px;word-spacing:0.3px;-webkit-text-stroke:0.35px currentColor;color:#111">510 - Coop des Lilas</span>
<span style="position:absolute;left:36.3px;top:546px;font:normal 11px/13px 'Liberation Sans';white-space:pre;transform:scaleX(1.08);transform-origin:0 0;letter-spacing:0.463px;word-spacing:0.3px;-webkit-text-stroke:0.35px currentColor;color:#111;clip-path:inset(0 0 7px 0)">noirs</span>
<span style="position:absolute;left:32.5px;top:571px;font:normal 11px/13px 'Liberation Sans';white-space:pre;transform:scaleX(1.08);transform-origin:0 0;letter-spacing:0.142px;word-spacing:0.3px;-webkit-text-stroke:0.35px currentColor;color:#111">Associé à un bon de travail</span>
<span style="position:absolute;left:8.5px;top:616px;font:normal 11px/13px 'Liberation Sans';white-space:pre;transform:scaleX(1.08);transform-origin:0 0;letter-spacing:0.17px;word-spacing:0.3px;-webkit-text-stroke:0.35px currentColor;color:#111">Sélection par</span>
<span style="position:absolute;left:17.3px;top:641px;font:normal 11px/13px 'Liberation Sans';white-space:pre;transform:scaleX(1.08);transform-origin:0 0;letter-spacing:0.259px;word-spacing:0.3px;-webkit-text-stroke:0.35px currentColor;color:#111">Projet</span>
<span style="position:absolute;left:6.5px;top:714px;font:bold 11px/13px 'Liberation Sans';white-space:pre;transform:scaleX(1.08);transform-origin:0 0;letter-spacing:0.309px;word-spacing:0.0px;-webkit-text-stroke:0.3px currentColor;color:#111">Format d'impression</span>
<span style="position:absolute;left:7.5px;top:742px;font:normal 11px/13px 'Liberation Sans';white-space:pre;transform:scaleX(1.08);transform-origin:0 0;letter-spacing:0.297px;word-spacing:0.3px;-webkit-text-stroke:0.35px currentColor;color:#111">Format</span>
<span style="position:absolute;left:60.2px;top:742px;font:normal 11px/13px 'Liberation Sans';white-space:pre;transform:scaleX(1.08);transform-origin:0 0;letter-spacing:0.052px;word-spacing:0.3px;-webkit-text-stroke:0.35px currentColor;color:#111">Sommaire</span>
<span style="position:absolute;left:178.2px;top:746px;font:normal 11px/13px 'Liberation Sans';white-space:pre;transform:scaleX(1.08);transform-origin:0 0;letter-spacing:0.03px;word-spacing:0.3px;-webkit-text-stroke:0.35px currentColor;color:#111">Contenu</span>
</body></html>
